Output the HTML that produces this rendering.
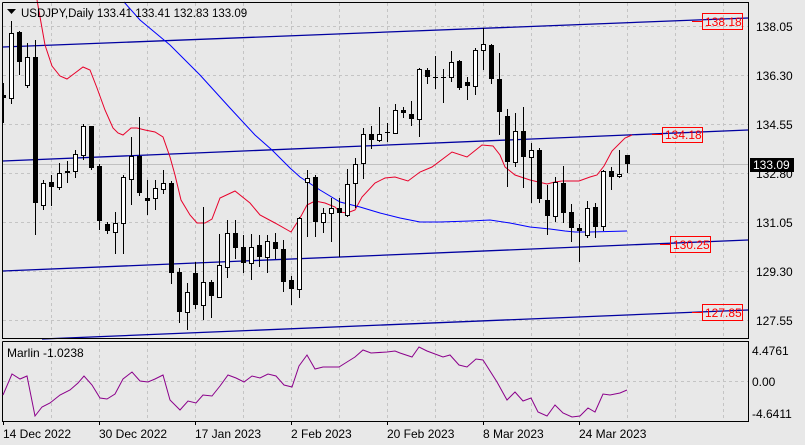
<!DOCTYPE html>
<html><head><meta charset="utf-8"><style>
html,body{margin:0;padding:0;background:#e8e8e8;}
svg{display:block;font-family:"Liberation Sans",Arial,sans-serif;font-size:11px;}
</style></head><body>
<svg width="805" height="445" viewBox="0 0 805 445" xmlns="http://www.w3.org/2000/svg">
<rect x="0" y="0" width="805" height="445" fill="#e8e8e8"/>
<g stroke="#c4c4c4" stroke-dasharray="3,3" stroke-width="1">
<path d="M51.5 3V338M99.5 3V338M147.5 3V338M195.5 3V338M243.5 3V338M291.5 3V338M339.5 3V338M387.5 3V338M435.5 3V338M483.5 3V338M531.5 3V338M579.5 3V338M627.5 3V338M675.5 3V338M723.5 3V338"/>
<path d="M51.5 343V420M99.5 343V420M147.5 343V420M195.5 343V420M243.5 343V420M291.5 343V420M339.5 343V420M387.5 343V420M435.5 343V420M483.5 343V420M531.5 343V420M579.5 343V420M627.5 343V420M675.5 343V420M723.5 343V420"/>
<path d="M3 26.5H748M3 75.5H748M3 124.5H748M3 173.5H748M3 222.5H748M3 271.5H748M3 320.5H748M3 381.5H748"/>
</g>
<line x1="3" y1="164.5" x2="748" y2="164.5" stroke="#c0c0c0"/>
<g stroke="#0000a0" stroke-width="1.3" fill="none">
<line x1="3" y1="47" x2="748" y2="18"/>
<line x1="3" y1="161" x2="748" y2="130"/>
<line x1="3" y1="271" x2="748" y2="240"/>
<line x1="42" y1="339" x2="748" y2="310"/>
</g>
<polyline fill="none" stroke="#e8002a" stroke-width="1" points="37,0 45,45 52,66 60,76 67,79 75,73 83,67 90,70 97,88 105,110 113,128 118,133 123,135 131,128 137,128 145,130 155,132 163,137 170,157 175,175 181,200 190,215 197,223 205,223 212,219 220,198 235,191 250,203 260,215 275,223 291,232 300,218 307,205 315,201 325,203 335,207 340,212 347,213 355,210 362,197 375,183 385,178 395,177 408,181 420,172 432,167 452,152 467,157 482,145 493,146 500,155 505,167 515,175 530,180 547,184 555,182 562,181 579,181 590,177 597,175 604,166 612,151 625,138 632,135"/>
<polyline fill="none" stroke="#0000ff" stroke-width="1" points="124,2 140,20 170,45 200,75 230,108 255,135 272,150 290,168 300,177 320,190 340,202 360,207 380,213 400,218 420,222 440,222 470,221 490,220 510,223 530,227 550,229 565,231 575,232 590,232 627,231"/>
<path stroke="#000" stroke-width="1" fill="none" d="M3.5 83V123M11.5 21V104M19.5 31V75M27.5 43V88M35.5 40V235M43.5 180V210M51.5 175V206M59.5 163V190M67.5 161V183M75.5 150V178M83.5 124V160M91.5 126V170M99.5 164V230M107.5 222V234M115.5 212V254M123.5 175V254M131.5 137V205M139.5 117V196M147.5 180V215M155.5 180V210M163.5 170V194M171.5 181V284M179.5 268V323M187.5 283V330M195.5 262V309M203.5 207V320M211.5 280V318M219.5 234V298M227.5 220V278M235.5 220V259M243.5 235V273M251.5 234V280M259.5 235V267M267.5 235V273M275.5 233V259M283.5 240V292M291.5 276V305M299.5 217V298M307.5 170V237M315.5 175V237M323.5 208V233M331.5 198V242M339.5 198V257M347.5 169V217M355.5 158V208M363.5 128V179M371.5 126V149M379.5 107V142M387.5 123V142M395.5 104V134M403.5 107V118M411.5 101V126M419.5 68V137M427.5 68V84M435.5 56V89M443.5 69V103M451.5 51V82M459.5 60V90M467.5 77V100M475.5 48V95M483.5 28V70M491.5 44V84M499.5 53V135M507.5 109V187M515.5 113V167M523.5 107V188M531.5 143V203M539.5 148V203M547.5 185V235M555.5 177V222M563.5 166V223M571.5 204V242M579.5 224V262M587.5 201V238M595.5 203V238M603.5 170V231M611.5 167V190M619.5 150V178M627.5 155V173"/>
<g fill="#000">
<rect x="2" y="95" width="4" height="3"/><rect x="17" y="32" width="5" height="30"/><rect x="33" y="57" width="5" height="146"/><rect x="49" y="182" width="5" height="5"/><rect x="65" y="171" width="5" height="2"/><rect x="89" y="126" width="5" height="42"/><rect x="97" y="166" width="5" height="55"/><rect x="105" y="224" width="5" height="7"/><rect x="137" y="156" width="5" height="37"/><rect x="145" y="198" width="5" height="3"/><rect x="169" y="183" width="5" height="90"/><rect x="177" y="272" width="5" height="40"/><rect x="193" y="273" width="5" height="32"/><rect x="209" y="282" width="5" height="14"/><rect x="233" y="233" width="5" height="15"/><rect x="241" y="247" width="5" height="16"/><rect x="257" y="245" width="5" height="12"/><rect x="273" y="242" width="5" height="7"/><rect x="281" y="249" width="5" height="33"/><rect x="289" y="280" width="5" height="9"/><rect x="313" y="177" width="5" height="45"/><rect x="337" y="208" width="5" height="5"/><rect x="369" y="134" width="5" height="6"/><rect x="385" y="132" width="5" height="1"/><rect x="401" y="110" width="5" height="3"/><rect x="409" y="114" width="5" height="5"/><rect x="425" y="70" width="5" height="7"/><rect x="433" y="77" width="5" height="1"/><rect x="441" y="77" width="5" height="1"/><rect x="457" y="61" width="5" height="27"/><rect x="465" y="82" width="5" height="4"/><rect x="489" y="45" width="5" height="34"/><rect x="497" y="79" width="5" height="33"/><rect x="505" y="116" width="5" height="46"/><rect x="521" y="131" width="5" height="26"/><rect x="537" y="150" width="5" height="49"/><rect x="545" y="200" width="5" height="16"/><rect x="561" y="183" width="5" height="30"/><rect x="569" y="212" width="5" height="16"/><rect x="577" y="228" width="5" height="3"/><rect x="593" y="207" width="5" height="20"/><rect x="609" y="171" width="5" height="6"/><rect x="625" y="155" width="5" height="9"/>
</g>
<g fill="#fff" stroke="#000" stroke-width="1">
<rect x="9.5" y="33.5" width="4" height="65"/><rect x="25.5" y="57.5" width="4" height="28"/><rect x="41.5" y="183.5" width="4" height="22"/><rect x="57.5" y="173.5" width="4" height="14"/><rect x="73.5" y="154.5" width="4" height="17"/><rect x="81.5" y="126.5" width="4" height="29"/><rect x="113.5" y="223.5" width="4" height="9"/><rect x="121.5" y="177.5" width="4" height="46"/><rect x="129.5" y="156.5" width="4" height="23"/><rect x="153.5" y="188.5" width="4" height="10"/><rect x="161.5" y="183.5" width="4" height="6"/><rect x="185.5" y="292.5" width="4" height="20"/><rect x="201.5" y="282.5" width="4" height="23"/><rect x="217.5" y="265.5" width="4" height="32"/><rect x="225.5" y="233.5" width="4" height="34"/><rect x="249.5" y="247.5" width="4" height="16"/><rect x="265.5" y="241.5" width="4" height="16"/><rect x="297.5" y="218.5" width="4" height="71"/><rect x="305.5" y="178.5" width="4" height="4"/><rect x="321.5" y="213.5" width="4" height="9"/><rect x="329.5" y="208.5" width="4" height="5"/><rect x="345.5" y="184.5" width="4" height="31"/><rect x="353.5" y="164.5" width="4" height="19"/><rect x="361.5" y="134.5" width="4" height="29"/><rect x="377.5" y="134.5" width="4" height="6"/><rect x="393.5" y="110.5" width="4" height="23"/><rect x="417.5" y="69.5" width="4" height="50"/><rect x="449.5" y="62.5" width="4" height="15"/><rect x="473.5" y="50.5" width="4" height="36"/><rect x="481.5" y="44.5" width="4" height="6"/><rect x="513.5" y="131.5" width="4" height="31"/><rect x="529.5" y="150.5" width="4" height="7"/><rect x="553.5" y="182.5" width="4" height="34"/><rect x="585.5" y="208.5" width="4" height="27"/><rect x="601.5" y="171.5" width="4" height="55"/><rect x="617.5" y="174.5" width="4" height="2"/>
</g>
<g stroke="#ff0000" fill="none" stroke-width="1">
<line x1="692" y1="21.5" x2="703" y2="21.5"/><rect x="702.5" y="13.5" width="40" height="16"/>
<line x1="652" y1="134.5" x2="663" y2="134.5"/><rect x="662.5" y="127.5" width="40" height="15"/>
<line x1="660" y1="244.5" x2="671" y2="244.5"/><rect x="670.5" y="236.5" width="40" height="16"/>
<line x1="692" y1="312.5" x2="703" y2="312.5"/><rect x="702.5" y="304.5" width="40" height="16"/>
</g>
<g fill="#ff0000" font-size="12">
<text x="705" y="26">138.18</text><text x="665" y="139">134.18</text><text x="673" y="249">130.25</text><text x="705" y="317">127.85</text>
</g>
<g stroke="#000" fill="none" stroke-width="1">
<path d="M2.5 2.5V338.5H748.5V2.5H2.5"/>
<path d="M2.5 341.5V421.5H748.5V341.5H2.5"/>
<path d="M748.5 26v3M748.5 75v3M748.5 124v3M748.5 173v3M748.5 222v3M748.5 271v3M748.5 320v3"/>
<path d="M3.5 421v4M99.5 421v4M195.5 421v4M291.5 421v4M387.5 421v4M483.5 421v4M579.5 421v4"/>
</g>
<polyline fill="none" stroke="#8b008b" stroke-width="1" points="3,395 12,374 20,379 27,376 35,416 42,407 50,403 60,395 70,390 78,383 84,376 92,385 100,398 107,399 115,394 123,379 132,372 140,381 148,382 155,379 163,375 170,400 180,410 188,401 196,403 203,395 212,396 220,386 228,375 236,378 244,382 252,376 260,378 268,374 276,376 284,385 292,387 299,366 307,355 315,369 323,367 339,367 347,362 355,357 363,350 371,353 387,352 395,351 400,353 412,357 419,347 427,351 443,357 450,355 459,365 467,367 476,359 483,360 497,382 507,400 515,392 523,401 531,398 538,412 547,416 555,405 563,413 572,417 580,416 588,408 595,412 603,394 610,395 620,393 627,390"/>
<g fill="#000" font-size="12">
<text x="756" y="31">138.05</text><text x="756" y="80">136.30</text><text x="756" y="129">134.55</text><text x="756" y="178">132.80</text><text x="756" y="227">131.05</text><text x="756" y="276">129.30</text><text x="756" y="325">127.55</text>
<text x="752" y="355">4.4761</text><text x="752" y="386">0.00</text><text x="752" y="418">-4.6411</text>
<text x="3" y="438">14 Dec 2022</text><text x="99" y="438">30 Dec 2022</text><text x="195" y="438">17 Jan 2023</text><text x="291" y="438">2 Feb 2023</text><text x="387" y="438">20 Feb 2023</text><text x="483" y="438">8 Mar 2023</text><text x="579" y="438">24 Mar 2023</text>
<text x="7" y="357">Marlin -1.0238</text>
<text x="21" y="17" font-size="11.5">USDJPY,Daily  133.41 133.41 132.83 133.09</text>
</g>
<path d="M7 9h9l-4.5 5z" fill="#000"/>
<rect x="750" y="158" width="44" height="14" fill="#000"/>
<text x="753" y="169" fill="#fff" font-size="12">133.09</text>
</svg>
</body></html>
